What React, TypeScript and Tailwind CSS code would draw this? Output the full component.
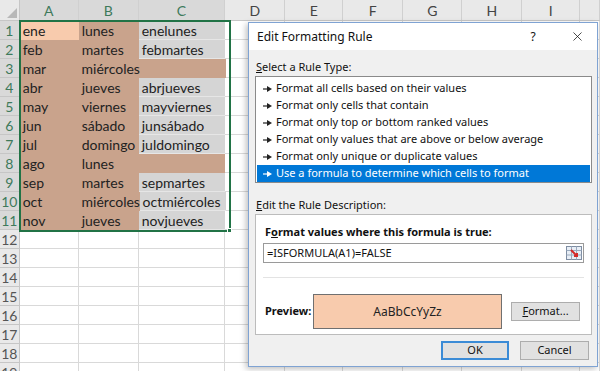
import React from "react";
import { X } from "lucide-react";

const cols = [
  { name: "A", w: "w-[60px]" },
  { name: "B", w: "w-[61px]" },
  { name: "C", w: "w-[88px]" },
  { name: "D", w: "w-[61px]" },
  { name: "E", w: "w-[59px]" },
  { name: "F", w: "w-[61px]" },
  { name: "G", w: "w-[60px]" },
  { name: "H", w: "w-[61px]" },
  { name: "I", w: "w-[59px]" },
  { name: "", w: "w-[20px]" },
];

const data = [
  ["ene", "lunes", "enelunes"],
  ["feb", "martes", "febmartes"],
  ["mar", "miércoles", ""],
  ["abr", "jueves", "abrjueves"],
  ["may", "viernes", "mayviernes"],
  ["jun", "sábado", "junsábado"],
  ["jul", "domingo", "juldomingo"],
  ["ago", "lunes", ""],
  ["sep", "martes", "sepmartes"],
  ["oct", "miércoles", "octmiércoles"],
  ["nov", "jueves", "novjueves"],
];

const ruleTypes = [
  "Format all cells based on their values",
  "Format only cells that contain",
  "Format only top or bottom ranked values",
  "Format only values that are above or below average",
  "Format only unique or duplicate values",
  "Use a formula to determine which cells to format",
];

function Pointer({ color }: { color: string }) {
  return (
    <svg width="10" height="6" viewBox="0 0 10 6" className="shrink-0">
      <line x1="0" y1="3" x2="5" y2="3" stroke={color} strokeWidth="1.2" />
      <polygon points="4,0 9,3 4,6" fill={color} />
    </svg>
  );
}

function RangeIcon() {
  return (
    <svg width="16" height="14" viewBox="0 0 16 14">
      <rect x="0.5" y="0.5" width="15" height="13" fill="#e8eef6" stroke="#7f8ea3" />
      <line x1="0.5" y1="4.5" x2="15.5" y2="4.5" stroke="#9aaabd" />
      <line x1="0.5" y1="9" x2="15.5" y2="9" stroke="#9aaabd" />
      <line x1="5.5" y1="0.5" x2="5.5" y2="13.5" stroke="#9aaabd" />
      <line x1="10.5" y1="0.5" x2="10.5" y2="13.5" stroke="#9aaabd" />
      <path d="M5 4 L11 10 M8 10 L11 10 L11 7" stroke="#d42a2a" strokeWidth="2" fill="none" />
    </svg>
  );
}

function cellClass(r: number, c: number, value: string) {
  if (r === 0 && c === 0) return "bg-[#f8cbad]";
  if (c < 2) return "bg-[#c9a38c]";
  if (value === "") return "bg-[#c9a38c]";
  return "bg-[#d5d5d5] border-b border-[#e6e6e6]";
}

function Sheet() {
  const rows = Array.from({ length: 19 }, (_, i) => i + 1);
  return (
    <div className="flex flex-col font-['Lato',sans-serif]">
      {/* column headers */}
      <div className="flex h-[21px] bg-[#e9e9e9] border-b border-[#c6c6c6]">
        <div className="w-[20px] h-full border-r border-[#c6c6c6] flex items-end justify-end p-[2px]">
          <div className="w-0 h-0 border-l-[10px] border-l-transparent border-b-[10px] border-b-[#b8b8b8]" />
        </div>
        {cols.map((c, i) => (
          <div
            key={c.name + i}
            className={
              c.w +
              " h-full flex items-center justify-center border-r border-[#d0d0d0] text-[14px] " +
              (i < 3 ? "bg-[#d9d9d9] text-[#3e7a5b]" : "text-[#444]")
            }
          >
            {c.name}
          </div>
        ))}
      </div>
      {rows.map((r) => {
        const sel = r <= 11;
        return (
          <div key={r} className="flex h-[19px] shrink-0">
            <div
              className={
                "w-[20px] h-full flex items-center justify-center border-r border-b border-[#c6c6c6] text-[14px] " +
                (sel ? "bg-[#d9d9d9] text-[#3e7a5b]" : "bg-[#e9e9e9] text-[#555]")
              }
            >
              {r}
            </div>
            {cols.map((c, i) => {
              if (sel && i < 3) {
                const v = data[r - 1][i];
                return (
                  <div
                    key={i}
                    className={c.w + " h-full flex items-center pl-[3px] text-[14px] text-[#222] whitespace-nowrap overflow-visible " + cellClass(r - 1, i, v)}
                  >
                    {v}
                  </div>
                );
              }
              return <div key={i} className={c.w + " h-full border-r border-b border-[#d9d9d9]"} />;
            })}
          </div>
        );
      })}
    </div>
  );
}

function Dialog() {
  return (
    <div className="absolute left-[248px] top-[22px] w-[350px] h-[345px] border border-[#7fa3d3] bg-[#f0f0f0] shadow-[-2px_2px_6px_rgba(0,0,0,0.25)] flex flex-col font-['Noto_Sans',sans-serif] text-[11px] text-[#111]">
      {/* TITLE BAR */}
      <div className="h-[27px] bg-white flex items-center pl-[8px] shrink-0">
        <span className="text-[12px] flex-1">Edit Formatting Rule</span>
        <span className="text-[12px] w-[14px] text-center mr-[30px]">?</span>
        <X size={15} strokeWidth={1.2} className="mr-[12px]" />
      </div>

      <div className="flex flex-col px-[6px] pr-[5px]">
        <div className="h-[13px] mt-[10px] leading-[13px] pl-[1px]">
          <span className="underline">S</span>elect a Rule Type:
        </div>
        {/* RULE TYPE LIST */}
        <div className="mt-[3px] h-[107px] bg-white border border-[#8a8a8a] pt-[3px] px-[1px]">
          {ruleTypes.map((t, i) => {
            const active = i === ruleTypes.length - 1;
            return (
              <div
                key={t}
                className={
                  "h-[17px] flex items-center gap-[3px] pl-[6px] " +
                  (active ? "bg-[#0078d7] text-white" : "text-[#111]")
                }
              >
                <Pointer color={active ? "#ffffff" : "#222222"} />
                <span>{t}</span>
              </div>
            );
          })}
        </div>

        <div className="h-[13px] mt-[15px] leading-[13px] pl-[1px]">
          <span className="underline">E</span>dit the Rule Description:
        </div>

        {/* DESCRIPTION BOX */}
        <div className="mt-[3px] h-[121px] bg-white border border-[#bcbcbc] px-[7px] flex flex-col">
          <div className="font-bold mt-[10px] leading-[13px] pl-[2px]">
            F<span className="underline">o</span>rmat values where this formula is true:
          </div>
          <div className="mt-[5px] h-[20px] border border-[#9a9a9a] flex items-center pl-[3px] pr-[1px]">
            <span className="flex-1">=ISFORMULA(A1)=FALSE</span>
            <RangeIcon />
          </div>
          <div className="mt-[14px] h-px bg-[#e3e3e3]" />
          <div className="flex items-center mt-[16px]">
            <span className="font-bold w-[50px] pl-[2px]">Preview:</span>
            <div className="w-[189px] h-[35px] bg-[#f8cbad] border border-[#707070] flex items-center justify-center text-[12px] text-[#222]">
              AaBbCcYyZz
            </div>
            <div className="ml-[9px] w-[69px] h-[19px] bg-[#e1e1e1] border border-[#adadad] flex items-center justify-center">
              <span className="underline">F</span>ormat...
            </div>
          </div>
        </div>

        {/* BUTTONS */}
        <div className="flex justify-end gap-[11px] mt-[6px] pr-[3px]">
          <div className="w-[68px] h-[19px] bg-[#e1e1e1] border-2 border-[#3b8bd6] flex items-center justify-center">
            OK
          </div>
          <div className="w-[69px] h-[19px] bg-[#e1e1e1] border border-[#adadad] flex items-center justify-center">
            Cancel
          </div>
        </div>
      </div>
    </div>
  );
}

export default function App() {
  return (
    <div className="relative w-[600px] h-[371px] overflow-hidden bg-white">
      <Sheet />
      {/* selection outline */}
      <div className="absolute left-[19px] top-[20px] w-[212px] h-[212px] border-2 border-[#217346]" />
      <div className="absolute left-[227px] top-[228px] w-[5px] h-[5px] bg-[#217346] border border-white" />
      <Dialog />
    </div>
  );
}
